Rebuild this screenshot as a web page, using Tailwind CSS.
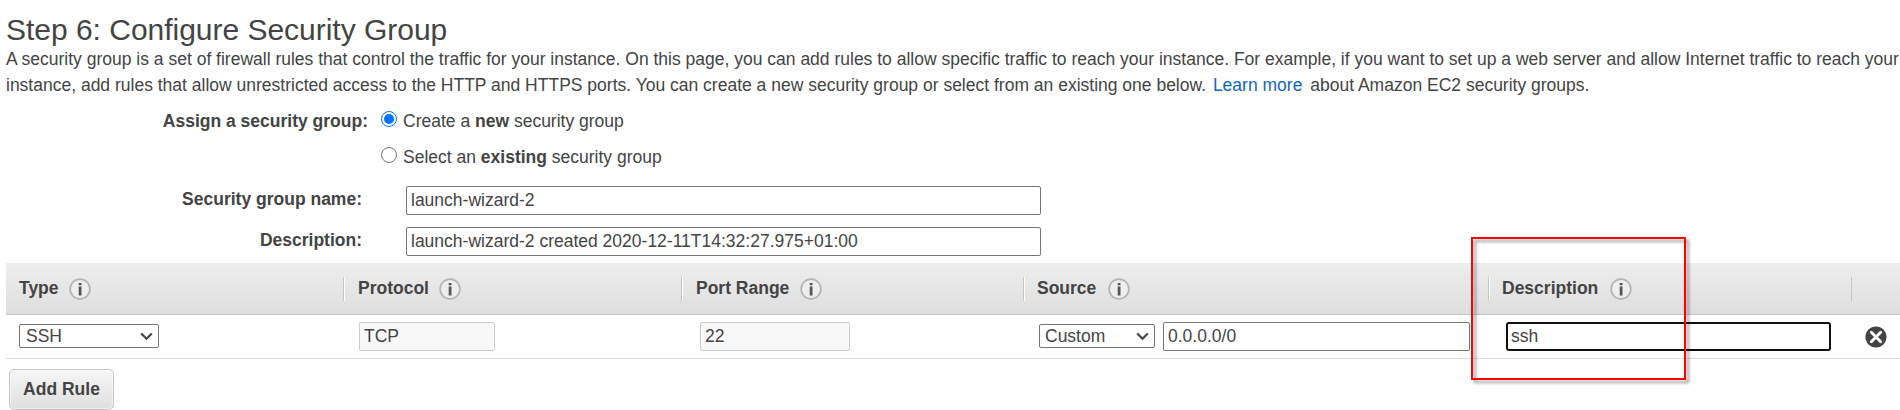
<!DOCTYPE html>
<html lang="en">
<head>
<meta charset="utf-8">
<title>Configure Security Group</title>
<script src="https://cdn.jsdelivr.net/npm/@tailwindcss/browser@4"></script>
</head>
<body class="bg-white text-[#444] font-['Liberation_Sans',Arial,sans-serif] text-[17.5px] leading-[26px] w-[1900px] h-[410px] overflow-hidden relative">
<svg class="hidden">
  <symbol id="info" viewBox="0 0 22 22">
    <circle cx="11" cy="11" r="9.9" fill="#eee" stroke="#b4b4b4" stroke-width="1.7"/>
    <path d="M9.7 5h2.8v2.2H9.7zM9.7 8.6h2.8v8.8H9.7z" fill="#555"/>
  </symbol>
</svg>
<main class="flex flex-col pl-[6px]">
  <h1 class="text-[30px] leading-[36px] mt-[12px] whitespace-nowrap tracking-[-0.02px]">Step 6: Configure Security Group</h1>
  <p class="mt-[-2px] whitespace-nowrap">A security group is a set of firewall rules that control the traffic for your instance. On this page, you can add rules to allow specific traffic to reach your instance. For example, if you want to set up a web server and allow Internet traffic to reach your<br>instance, add rules that allow unrestricted access to the HTTP and HTTPS ports. You can create a new security group or select from an existing one below. <a class="text-[#1166bb] ml-[2px] mr-[3px]">Learn more</a> about Amazon EC2 security groups.</p>

  <section class="flex mt-[10px] h-[36px]">
    <div class="w-[362px] text-right font-bold">Assign a security group:</div>
    <div class="ml-[13px] mt-[3px] size-4 rounded-full border border-[#0075ff] flex items-center justify-center"><div class="size-[10px] rounded-full bg-[#0075ff]"></div></div>
    <div class="ml-[6px]">Create a <b>new</b> security group</div>
  </section>
  <section class="flex h-[39px]">
    <div class="ml-[375px] mt-[3px] size-4 rounded-full border border-[#767676]"></div>
    <div class="ml-[6px]">Select an <b>existing</b> security group</div>
  </section>
  <section class="flex h-[41px] pt-[3px]">
    <div class="w-[356px] text-right font-bold">Security group name:</div>
    <div class="ml-[44px] w-[635px] h-[29px] border border-[#767676] rounded-[2px] pl-1 leading-[27px]">launch-wizard-2</div>
  </section>
  <section class="flex h-[39px] pt-[3px]">
    <div class="w-[356px] text-right font-bold">Description:</div>
    <div class="ml-[44px] w-[635px] h-[29px] border border-[#767676] rounded-[2px] pl-1 leading-[27px]">launch-wizard-2 created 2020-12-11T14:32:27.975+01:00</div>
  </section>

  <div class="flex h-[52px] border-b border-[#c5c5c5] bg-linear-to-b from-[#eee] to-[#dedede] font-bold pt-[12px]">
    <div class="w-[337px] pl-[13px] flex"><span class="w-[50px]">Type</span><svg class="w-[22px] h-[22px] mt-[3px]"><use href="#info"/></svg></div>
    <div class="w-[338px] pl-[15px] flex relative"><i class="absolute left-0 top-[2px] h-6 w-[2px] bg-white border-l border-[#c5c5c5]"></i><span class="w-[81px]">Protocol</span><svg class="w-[22px] h-[22px] mt-[3px]"><use href="#info"/></svg></div>
    <div class="w-[342px] pl-[15px] flex relative"><i class="absolute left-0 top-[2px] h-6 w-[2px] bg-white border-l border-[#c5c5c5]"></i><span class="w-[104px]">Port Range</span><svg class="w-[22px] h-[22px] mt-[3px]"><use href="#info"/></svg></div>
    <div class="w-[465px] pl-[14px] flex relative"><i class="absolute left-0 top-[2px] h-6 w-[2px] bg-white border-l border-[#c5c5c5]"></i><span class="w-[71px]">Source</span><svg class="w-[22px] h-[22px] mt-[3px]"><use href="#info"/></svg></div>
    <div class="w-[363px] pl-[14px] flex relative"><i class="absolute left-0 top-[2px] h-6 w-[2px] bg-white border-l border-[#c5c5c5]"></i><span class="w-[108px]">Description</span><svg class="w-[22px] h-[22px] mt-[3px]"><use href="#info"/></svg></div>
    <div class="mt-[2px] h-6 w-px bg-[#c5c5c5]"></div>
  </div>

  <div class="flex items-start h-[44px] border-b border-[#ddd] pt-[7px] leading-[27px]">
    <div class="ml-[13px] mt-[2px] w-[140px] h-[24px] border border-[#767676] rounded-[2px] pl-[6px] pr-[5px] leading-[23px] flex items-center justify-between">SSH<svg class="w-[13px] h-[9px]" viewBox="0 0 13 9" fill="none" stroke="#444" stroke-width="2.2"><path d="M1.2 1.5l5.3 5.3 5.3-5.3"/></svg></div>
    <div class="ml-[200px] w-[136px] h-[29px] border border-[#ccc] bg-[#f8f8f8] rounded-[2px] pl-1">TCP</div>
    <div class="ml-[205px] w-[150px] h-[29px] border border-[#ccc] bg-[#f8f8f8] rounded-[2px] pl-1">22</div>
    <div class="ml-[189px] mt-[2px] w-[116px] h-[24px] border border-[#767676] rounded-[2px] pl-[5px] pr-[5px] leading-[23px] flex items-center justify-between">Custom<svg class="w-[13px] h-[9px]" viewBox="0 0 13 9" fill="none" stroke="#444" stroke-width="2.2"><path d="M1.2 1.5l5.3 5.3 5.3-5.3"/></svg></div>
    <div class="ml-[8px] w-[307px] h-[29px] border border-[#767676] rounded-[2px] pl-1">0.0.0.0/0</div>
    <div class="ml-[36px] w-[325px] h-[29px] border-2 border-[#101010] rounded-[3px] pl-[3px] leading-[25px]">ssh</div>
    <svg class="ml-[34px] mt-[4px] w-[22px] h-[22px]" viewBox="0 0 22 22"><circle cx="11" cy="11" r="10.6" fill="#444"/><path d="M6.3 6.3l9.4 9.4M15.7 6.3l-9.4 9.4" stroke="#fff" stroke-width="2.8" stroke-linecap="round"/></svg>
  </div>
  <div class="ml-[3px] mt-[10px] w-[105px] h-[41px] border border-[#c5c5c5] rounded-[5px] bg-linear-to-b from-[#f6f6f6] to-[#dfdfdf] font-bold text-center leading-[39px] shadow-[inset_0_0_1px_1px_rgba(255,255,255,0.5)]">Add Rule</div>
</main>
<div class="absolute left-[1471px] top-[237px] w-[215px] h-[143px] border-2 border-[#f00] [filter:drop-shadow(3px_3px_1.5px_rgba(0,0,0,0.4))]"></div>
</body>
</html>
